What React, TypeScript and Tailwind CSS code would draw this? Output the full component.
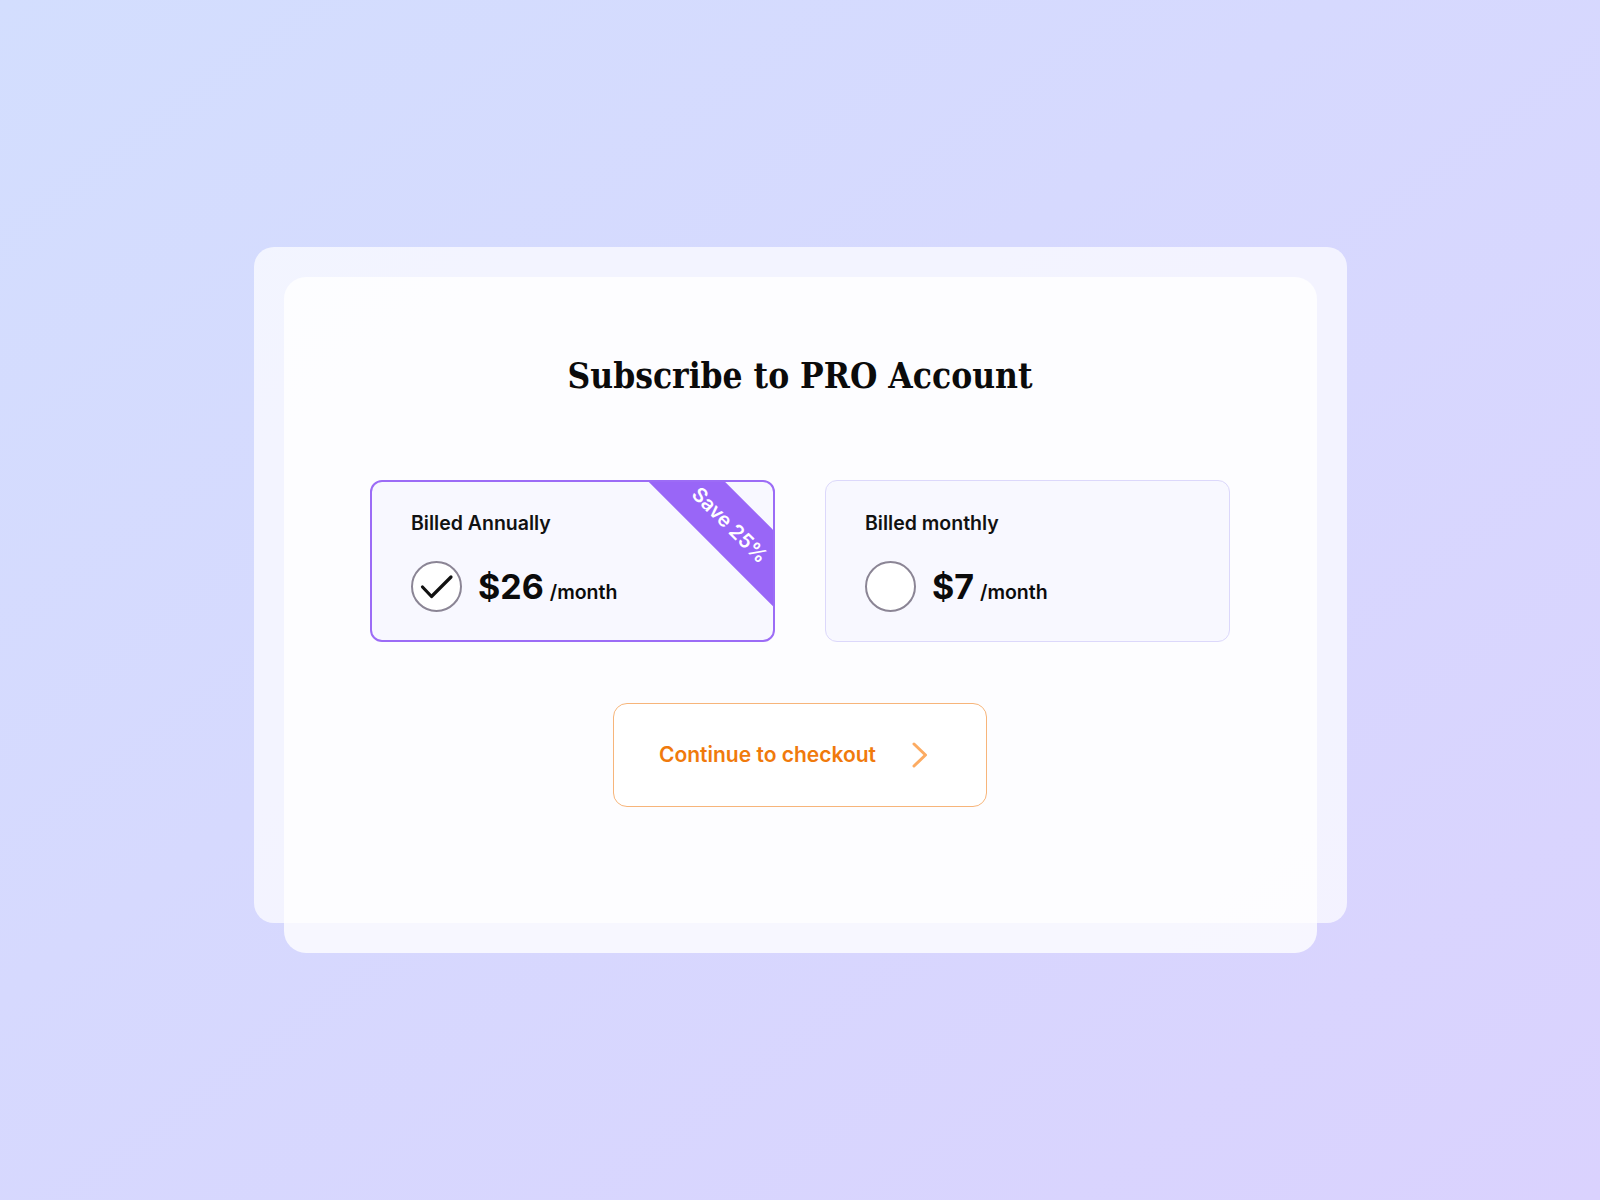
import { useState } from 'react';

const PLANS = [
  { id: 'annual', label: 'Billed Annually', price: '$26', badge: 'Save 25%' },
  { id: 'monthly', label: 'Billed monthly', price: '$7', badge: null },
];

function CheckIcon() {
  return (
    <svg width="34" height="26" viewBox="0 0 34 26" fill="none">
      <path d="M2.5 13 L11.5 22.5 L31 3" stroke="#111111" strokeWidth="3.2" strokeLinecap="round" strokeLinejoin="round" />
    </svg>
  );
}

function Chevron() {
  return (
    <svg width="18" height="26" viewBox="0 0 18 26" fill="none">
      <path d="M3 2 L14.5 13 L3 24" stroke="#fcab62" strokeWidth="3" strokeLinecap="round" strokeLinejoin="round" />
    </svg>
  );
}

export default function App() {
  const [selected, setSelected] = useState('annual');

  return (
    <div
      className="w-full min-h-[1200px] flex items-center justify-center bg-gradient-to-br from-[#d3defe] to-[#dad2fe]"
      style={{ fontFamily: 'Inter, "Noto Sans", sans-serif' }}
    >
      {/* back panel */}
      <div className="w-[1093px] h-[676px] rounded-[20px] bg-white/70 px-[30px] pt-[30px] mb-[30px]">
        {/* main card */}
        <div className="h-[676px] rounded-[22px] bg-white/80 flex flex-col items-center pt-[78px]">
          <h1
            className="text-[35px] leading-[1.2] font-bold text-[#0b0b0b]"
            style={{ fontFamily: '"DejaVu Serif Condensed", "DejaVu Serif", "Liberation Serif", serif', fontStretch: 'condensed' }}
          >
            Subscribe to PRO Account
          </h1>

          <div className="flex gap-[50px] mt-[83px]">
            {PLANS.map((p) => {
              const active = selected === p.id;
              return (
                <button
                  key={p.id}
                  onClick={() => setSelected(p.id)}
                  className={
                    'relative overflow-hidden w-[405px] h-[162px] rounded-[12px] bg-[#f8f8ff] text-left flex flex-col ' +
                    (active ? 'border-2 border-[#9c6cf6] pl-[39px] pt-[29px]' : 'border border-[#dcd8fb] pl-[39px] pt-[30px]')
                  }
                >
                  <span className="text-[19.5px] leading-[24px] font-semibold text-[#111111]">{p.label}</span>
                  <div className="flex items-center gap-[16px] mt-[26px]">
                    <span className="w-[51px] h-[51px] rounded-full border-2 border-[#8b8595] bg-white flex items-center justify-center">
                      {active && <CheckIcon />}
                    </span>
                    <span className="flex items-baseline gap-[6px] text-[#0b0b0b]">
                      <span className="text-[34px] font-bold leading-none">{p.price}</span>
                      <span className="text-[19.5px] font-semibold leading-none">/month</span>
                    </span>
                  </div>
                  {p.badge && (
                    <div className="absolute top-[16px] right-[-69px] w-[224px] h-[54px] rotate-45 bg-[#9966f7] flex items-center justify-center">
                      <span className="text-[20px] font-semibold text-white">{p.badge}</span>
                    </div>
                  )}
                </button>
              );
            })}
          </div>

          <button className="mt-[61px] w-[374px] h-[104px] rounded-[14px] border border-[#f7b57a] bg-white flex items-center pl-[45px] gap-[35px]">
            <span className="text-[21px] font-semibold text-[#f07a0c]">Continue to checkout</span>
            <Chevron />
          </button>
        </div>
      </div>
    </div>
  );
}
